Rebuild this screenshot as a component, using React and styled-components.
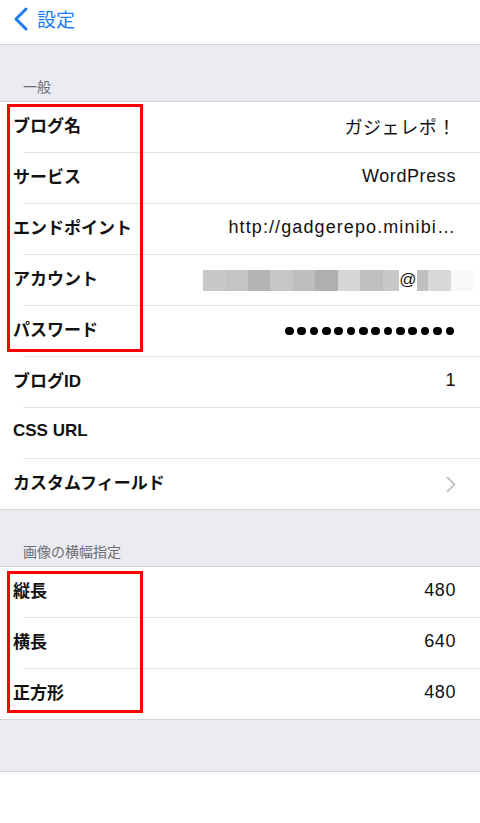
import React from "react";
import styled, { createGlobalStyle } from "styled-components";

const Global = createGlobalStyle`
  html, body { margin: 0; padding: 0; background: #fff; }
  body { font-family: "Liberation Sans", "Noto Sans CJK JP", sans-serif; -webkit-font-smoothing: antialiased; }
  * { box-sizing: border-box; }
`;

const Page = styled.div`
  width: 480px;
  min-height: 823px;
  background: #fff;
  display: flex;
  flex-direction: column;
`;

const NavBar = styled.header`
  height: 45px;
  flex: none;
  display: flex;
  align-items: center;
  padding-left: 13px;
  gap: 8px;
  border-bottom: 1px solid #d6d6da;
  background: #fff;
`;

const BackTitle = styled.span`
  font-family: "Noto Sans CJK JP", sans-serif;
  font-size: 19px;
  color: #1a7cf6;
  line-height: 1;
  margin-top: -8px;
`;

const BackIcon = styled.svg`
  margin-top: -6px;
`;

const Content = styled.main`
  background: #ebebf1;
  display: flex;
  flex-direction: column;
`;

const SectionHeader = styled.div`
  height: 56px;
  display: flex;
  align-items: flex-end;
  padding: 0 0 8px 23px;
  font-family: "Noto Sans CJK JP", sans-serif;
  font-size: 14px;
  color: #6d6d72;
  line-height: 1;
`;

const Group = styled.section`
  background: #fff;
  border-top: 1px solid #d5d5da;
  border-bottom: 1px solid #d5d5da;
  display: flex;
  flex-direction: column;
`;

const Highlighted = styled.div`
  position: relative;
  display: flex;
  flex-direction: column;
`;

const Frame = styled.div`
  position: absolute;
  left: 7px;
  width: 136px;
  top: ${(p) => p.$top}px;
  bottom: ${(p) => p.$bottom}px;
  border: 3px solid #ff0000;
  pointer-events: none;
`;

const Row = styled.div`
  height: 50px;
  display: flex;
  align-items: center;
  justify-content: space-between;
  padding: 0 24px 0 13px;
`;

const Separator = styled.div`
  height: 1px;
  margin-left: 23px;
  background: #e3e3e6;
`;

const Label = styled.span`
  font-family: "Liberation Sans", "Noto Sans CJK JP", sans-serif;
  font-weight: 700;
  font-size: 17px;
  color: #111;
  margin-top: -5px;
`;

const Value = styled.span`
  font-family: "Liberation Sans", "Noto Sans CJK JP", sans-serif;
  font-size: 18px;
  letter-spacing: ${(p) => (p.$wide ? 1.1 : 0.6)}px;
  color: #111;
  white-space: nowrap;
  margin-top: -3px;
`;

const Mosaic = styled.div`
  display: flex;
  align-items: center;
  height: 21px;
  margin-right: -17px;
`;

const Tile = styled.span`
  height: 21px;
  width: ${(p) => p.$w}px;
  background: ${(p) => p.$c};
`;

const At = styled.span`
  width: 18px;
  text-align: center;
  font-family: "Liberation Sans", sans-serif;
  font-size: 17px;
  color: #111;
`;

const Dots = styled.div`
  display: flex;
  gap: 3.85px;
  margin-right: 2px;
`;

const Dot = styled.span`
  width: 8.5px;
  height: 8.5px;
  border-radius: 50%;
  background: #000;
`;

const Footer = styled.div`
  height: 52px;
  border-bottom: 1px solid #d5d5da;
`;

const Chevron = () => (
  <svg width="10" height="17" viewBox="0 0 10 17">
    <polyline points="1.5,1.5 8.5,8.5 1.5,15.5" fill="none" stroke="#c4c4c9" strokeWidth="2" strokeLinecap="round" strokeLinejoin="round" />
  </svg>
);

const tilesBefore = [
  [23, "#c8c8c8"], [22, "#c4c4c4"], [22, "#b4b4b4"], [23, "#c6c6c6"], [22, "#bebebe"],
  [23, "#b0b0b0"], [22, "#d6d6d6"], [23, "#c0c0c0"], [16, "#c8c8c8"],
];
const tilesAfter = [[11, "#c0c0c0"], [23, "#d8d8d8"], [22, "#f8f8f8"]];

const Rows = ({ items }) =>
  items.map((it, i) => (
    <React.Fragment key={it.label}>
      {i > 0 && <Separator />}
      <Row>
        <Label>{it.label}</Label>
        {it.value}
      </Row>
    </React.Fragment>
  ));

export default function App() {
  const general1 = [
    { label: "ブログ名", value: <Value>ガジェレポ！</Value> },
    { label: "サービス", value: <Value>WordPress</Value> },
    { label: "エンドポイント", value: <Value $wide>http://gadgerepo.minibi…</Value> },
    {
      label: "アカウント",
      value: (
        <Mosaic>
          {tilesBefore.map(([w, c], i) => <Tile key={"b" + i} $w={w} $c={c} />)}
          <At>@</At>
          {tilesAfter.map(([w, c], i) => <Tile key={"a" + i} $w={w} $c={c} />)}
        </Mosaic>
      ),
    },
    {
      label: "パスワード",
      value: (
        <Dots>
          {Array.from({ length: 14 }).map((_, i) => <Dot key={i} />)}
        </Dots>
      ),
    },
  ];
  const general2 = [
    { label: "ブログID", value: <Value>1</Value> },
    { label: "CSS URL", value: null },
    { label: "カスタムフィールド", value: <Chevron /> },
  ];
  const sizes = [
    { label: "縦長", value: <Value>480</Value> },
    { label: "横長", value: <Value>640</Value> },
    { label: "正方形", value: <Value>480</Value> },
  ];

  return (
    <Page>
      <Global />
      <NavBar>
        <BackIcon width="16" height="24" viewBox="0 0 16 24">
          <polyline points="13,2 3,12 13,22" fill="none" stroke="#1a7cf6" strokeWidth="3" strokeLinecap="round" strokeLinejoin="round" />
        </BackIcon>
        <BackTitle>設定</BackTitle>
      </NavBar>
      <Content>
        <SectionHeader>一般</SectionHeader>
        <Group>
          <Highlighted>
            <Rows items={general1} />
            <Frame $top={2} $bottom={4} />
          </Highlighted>
          <Separator />
          <Rows items={general2} />
        </Group>
        <SectionHeader>画像の横幅指定</SectionHeader>
        <Group>
          <Highlighted>
            <Rows items={sizes} />
            <Frame $top={4} $bottom={6} />
          </Highlighted>
        </Group>
        <Footer />
      </Content>
    </Page>
  );
}
